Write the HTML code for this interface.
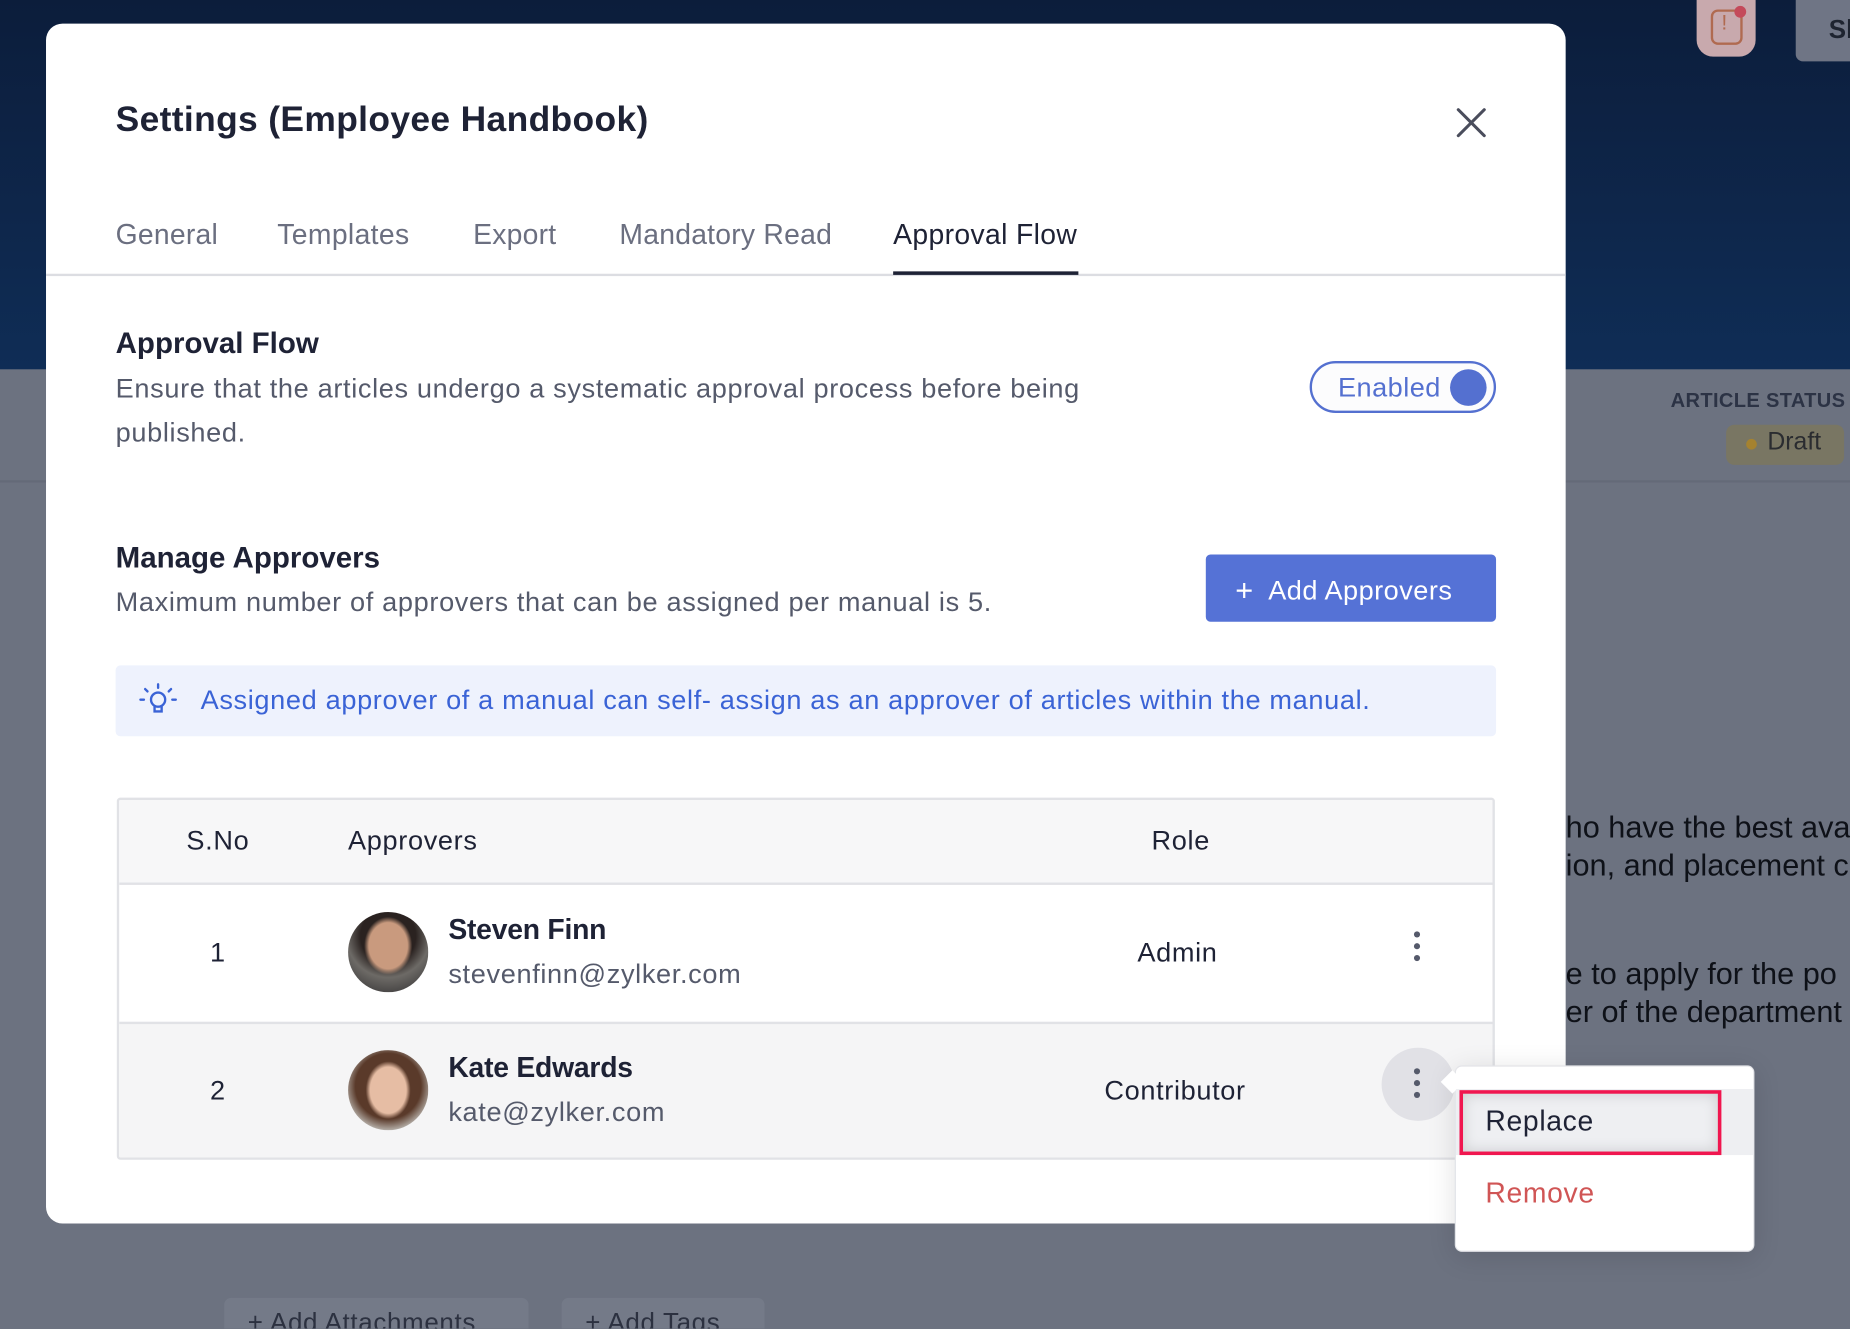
<!DOCTYPE html>
<html><head><meta charset="utf-8"><style>
*{box-sizing:border-box;margin:0;padding:0}
html,body{width:1850px;height:1328px;overflow:hidden;background:#6c7280}
#s{position:absolute;left:0;top:0;width:1568px;height:1126px;transform:scale(1.17985);transform-origin:0 0;font-family:"Liberation Sans",sans-serif;background:#6c7280;overflow:hidden}
.a{position:absolute}
.t{white-space:nowrap}
.r{letter-spacing:.55px}
</style></head><body><div id="s">
<div class="a" style="left:0;top:0;width:1568px;height:313px;background:linear-gradient(180deg,#0c1d3b,#0f2d56)"></div>
<div class="a" style="left:0;top:407px;width:1568px;height:2px;background:#646a78"></div>
<div class="a" style="left:1438px;top:0;width:50px;height:48px;border-radius:0 0 14px 14px;background:#c8a9ad"></div>
<div class="a" style="left:1450px;top:8px;width:27px;height:30px;border:2px solid #b06a50;border-radius:6px"></div>
<div class="a t" style="left:1459px;top:9px;color:#b06a50;font-size:18px">!</div>
<div class="a" style="left:1470px;top:5px;width:10px;height:10px;border-radius:50%;background:#c44a5a"></div>
<div class="a" style="left:1522px;top:0;width:60px;height:52px;border-radius:0 0 0 6px;background:#6f7585"></div>
<div class="a t" style="left:1550px;top:12px;font-size:22px;font-weight:bold;color:#1e2430">Sl</div>
<div class="a t" style="left:1416px;top:330px;font-size:17px;font-weight:bold;color:#2c3345;letter-spacing:.3px">ARTICLE STATUS</div>
<div class="a" style="left:1463px;top:360px;width:100px;height:34px;border-radius:7px;background:#797663"></div>
<div class="a" style="left:1480px;top:372px;width:9px;height:9px;border-radius:50%;background:#a5822f"></div>
<div class="a t" style="left:1498px;top:363px;font-size:21px;color:#2a2c30">Draft</div>
<div class="a t" style="left:1327px;top:685px;font-size:26px;color:#0e1118;line-height:32px">ho have the best ava<br>ion, and placement c</div>
<div class="a t" style="left:1327px;top:809px;font-size:26px;color:#0e1118;line-height:32px">e to apply for the po<br>er of the department</div>
<div class="a" style="left:190px;top:1100px;width:258px;height:40px;border-radius:6px;background:#747a88"></div>
<div class="a t r" style="left:210px;top:1108px;font-size:22px;color:#2c3140">+ Add Attachments</div>
<div class="a" style="left:476px;top:1100px;width:172px;height:40px;border-radius:6px;background:#747a88"></div>
<div class="a t r" style="left:496px;top:1108px;font-size:22px;color:#2c3140">+ Add Tags</div>

<div class="a" style="left:39px;top:20px;width:1288px;height:1017px;background:#fff;border-radius:14px"></div>
<div class="a t" style="left:98px;top:85px;font-size:30px;font-weight:bold;color:#1e2235;letter-spacing:.3px">Settings (Employee Handbook)</div>
<svg class="a" style="left:1233px;top:90px" width="28" height="28" viewBox="0 0 28 28"><path d="M3 3L25 25M25 3L3 25" stroke="#4a4d5c" stroke-width="2.6" stroke-linecap="round"/></svg>
<div class="a t" style="left:98px;top:186px;font-size:24px;color:#6b6f80;letter-spacing:.2px">General</div>
<div class="a t" style="left:235px;top:186px;font-size:24px;color:#6b6f80;letter-spacing:.3px">Templates</div>
<div class="a t" style="left:401px;top:186px;font-size:24px;color:#6b6f80;letter-spacing:.2px">Export</div>
<div class="a t" style="left:525px;top:186px;font-size:24px;color:#6b6f80;letter-spacing:.2px">Mandatory Read</div>
<div class="a t" style="left:757px;top:186px;font-size:24px;color:#1e2235;letter-spacing:.3px">Approval Flow</div>
<div class="a" style="left:39px;top:232px;width:1288px;height:2px;background:#dcdde2"></div>
<div class="a" style="left:757px;top:230px;width:157px;height:3px;background:#1e2235"></div>

<div class="a t" style="left:98px;top:277px;font-size:25px;font-weight:bold;color:#1e2235">Approval Flow</div>
<div class="a r" style="left:98px;top:311px;width:880px;font-size:23px;color:#555a6b;line-height:37px">Ensure that the articles undergo a systematic approval process before being published.</div>
<div class="a" style="left:1110px;top:306px;width:158px;height:44px;border:2px solid #5470d0;border-radius:22px;background:#fcfcfd"></div>
<div class="a t" style="left:1134px;top:315px;font-size:23px;color:#5470d0;letter-spacing:.4px">Enabled</div>
<div class="a" style="left:1229px;top:313px;width:31px;height:31px;border-radius:50%;background:#5470d0"></div>

<div class="a t" style="left:98px;top:459px;font-size:25px;font-weight:bold;color:#1e2235">Manage Approvers</div>
<div class="a t r" style="left:98px;top:497px;font-size:23px;color:#555a6b">Maximum number of approvers that can be assigned per manual is 5.</div>
<div class="a" style="left:1022px;top:470px;width:246px;height:57px;border-radius:4px;background:#5572d6"></div>
<div class="a t" style="left:1047px;top:484px;font-size:23px;color:#fff;letter-spacing:.4px"><span style="font-size:26px;position:relative;top:1px">+</span>&nbsp; Add Approvers</div>

<div class="a" style="left:98px;top:564px;width:1170px;height:60px;border-radius:4px;background:#eef2fd"></div>
<svg class="a" style="left:117px;top:577px" width="34" height="34" viewBox="0 0 34 34" fill="none" stroke="#3a63d6" stroke-width="2" stroke-linecap="round"><circle cx="17" cy="16" r="6"/><path d="M14 22v4h6v-4M17 3v3M6 7l2 2M28 7l-2 2M2 16h3M29 16h3"/></svg>
<div class="a t r" style="left:170px;top:580px;font-size:23px;color:#3a63d6">Assigned approver of a manual can self- assign as an approver of articles within the manual.</div>

<div class="a" style="left:99px;top:676px;width:1168px;height:307px;border:2px solid #e1e2e6;border-radius:3px;background:#fff;overflow:hidden">
 <div class="a" style="left:0;top:0;width:1168px;height:72px;background:#f7f7f8;border-bottom:2px solid #e1e2e6"></div>
 <div class="a" style="left:0;top:188px;width:1168px;height:117px;background:#f5f5f6;border-top:2px solid #e1e2e6"></div>
</div>
<div class="a t r" style="left:158px;top:699px;font-size:23px;color:#1e2235">S.No</div>
<div class="a t r" style="left:295px;top:699px;font-size:23px;color:#1e2235">Approvers</div>
<div class="a t r" style="left:976px;top:699px;font-size:23px;color:#1e2235">Role</div>

<div class="a t" style="left:178px;top:794px;font-size:23px;color:#1e2235">1</div>
<div class="a" style="left:295px;top:773px;width:68px;height:68px;border-radius:50%;background:radial-gradient(ellipse 30% 36% at 50% 42%,#c99a7e 0 80%,transparent 100%),radial-gradient(circle at 50% 30%,#2a2220 0 40%,#6d6a66 60%,#2b2a2c 100%)"></div>
<div class="a t" style="left:380px;top:775px;font-size:24px;font-weight:bold;color:#1e2235;letter-spacing:-.2px">Steven Finn</div>
<div class="a t r" style="left:380px;top:812px;font-size:23px;color:#555a6b">stevenfinn@zylker.com</div>
<div class="a t r" style="left:964px;top:794px;font-size:23px;color:#1e2235">Admin</div>
<svg class="a" style="left:1195px;top:788px" width="12" height="30"><circle cx="6" cy="4" r="2.6" fill="#555a6b"/><circle cx="6" cy="14" r="2.6" fill="#555a6b"/><circle cx="6" cy="24" r="2.6" fill="#555a6b"/></svg>

<div class="a t" style="left:178px;top:911px;font-size:23px;color:#1e2235">2</div>
<div class="a" style="left:295px;top:890px;width:68px;height:68px;border-radius:50%;background:radial-gradient(ellipse 28% 36% at 50% 50%,#e6bda4 0 80%,transparent 100%),radial-gradient(circle at 50% 45%,#5a3a2a 0 55%,#b9b4ae 75%,#d8d4cf 100%)"></div>
<div class="a t" style="left:380px;top:892px;font-size:24px;font-weight:bold;color:#1e2235;letter-spacing:-.2px">Kate Edwards</div>
<div class="a t r" style="left:380px;top:929px;font-size:23px;color:#555a6b">kate@zylker.com</div>
<div class="a t r" style="left:936px;top:911px;font-size:23px;color:#1e2235">Contributor</div>
<div class="a" style="left:1171px;top:888px;width:62px;height:62px;border-radius:50%;background:#e1e1e6"></div>
<svg class="a" style="left:1195px;top:904px" width="12" height="30"><circle cx="6" cy="4" r="2.6" fill="#555a6b"/><circle cx="6" cy="14" r="2.6" fill="#555a6b"/><circle cx="6" cy="24" r="2.6" fill="#555a6b"/></svg>

<div class="a" style="left:1233px;top:903px;width:254px;height:158px;background:#fff;border:1px solid #e3e4e8;border-radius:6px;box-shadow:0 4px 24px rgba(0,0,0,.12)"></div>
<div class="a" style="left:1224px;top:910px;width:14px;height:14px;background:#fff;transform:rotate(45deg)"></div>
<div class="a" style="left:1234px;top:923px;width:252px;height:56px;background:#eeeff2"></div>
<div class="a" style="left:1237px;top:924px;width:222px;height:55px;border:3px solid #f0164f;box-shadow:inset 0 0 12px rgba(0,0,0,.15)"></div>
<div class="a t r" style="left:1259px;top:937px;font-size:24px;color:#1e2235">Replace</div>
<div class="a t r" style="left:1259px;top:998px;font-size:24px;color:#d05555">Remove</div>
</div></body></html>
